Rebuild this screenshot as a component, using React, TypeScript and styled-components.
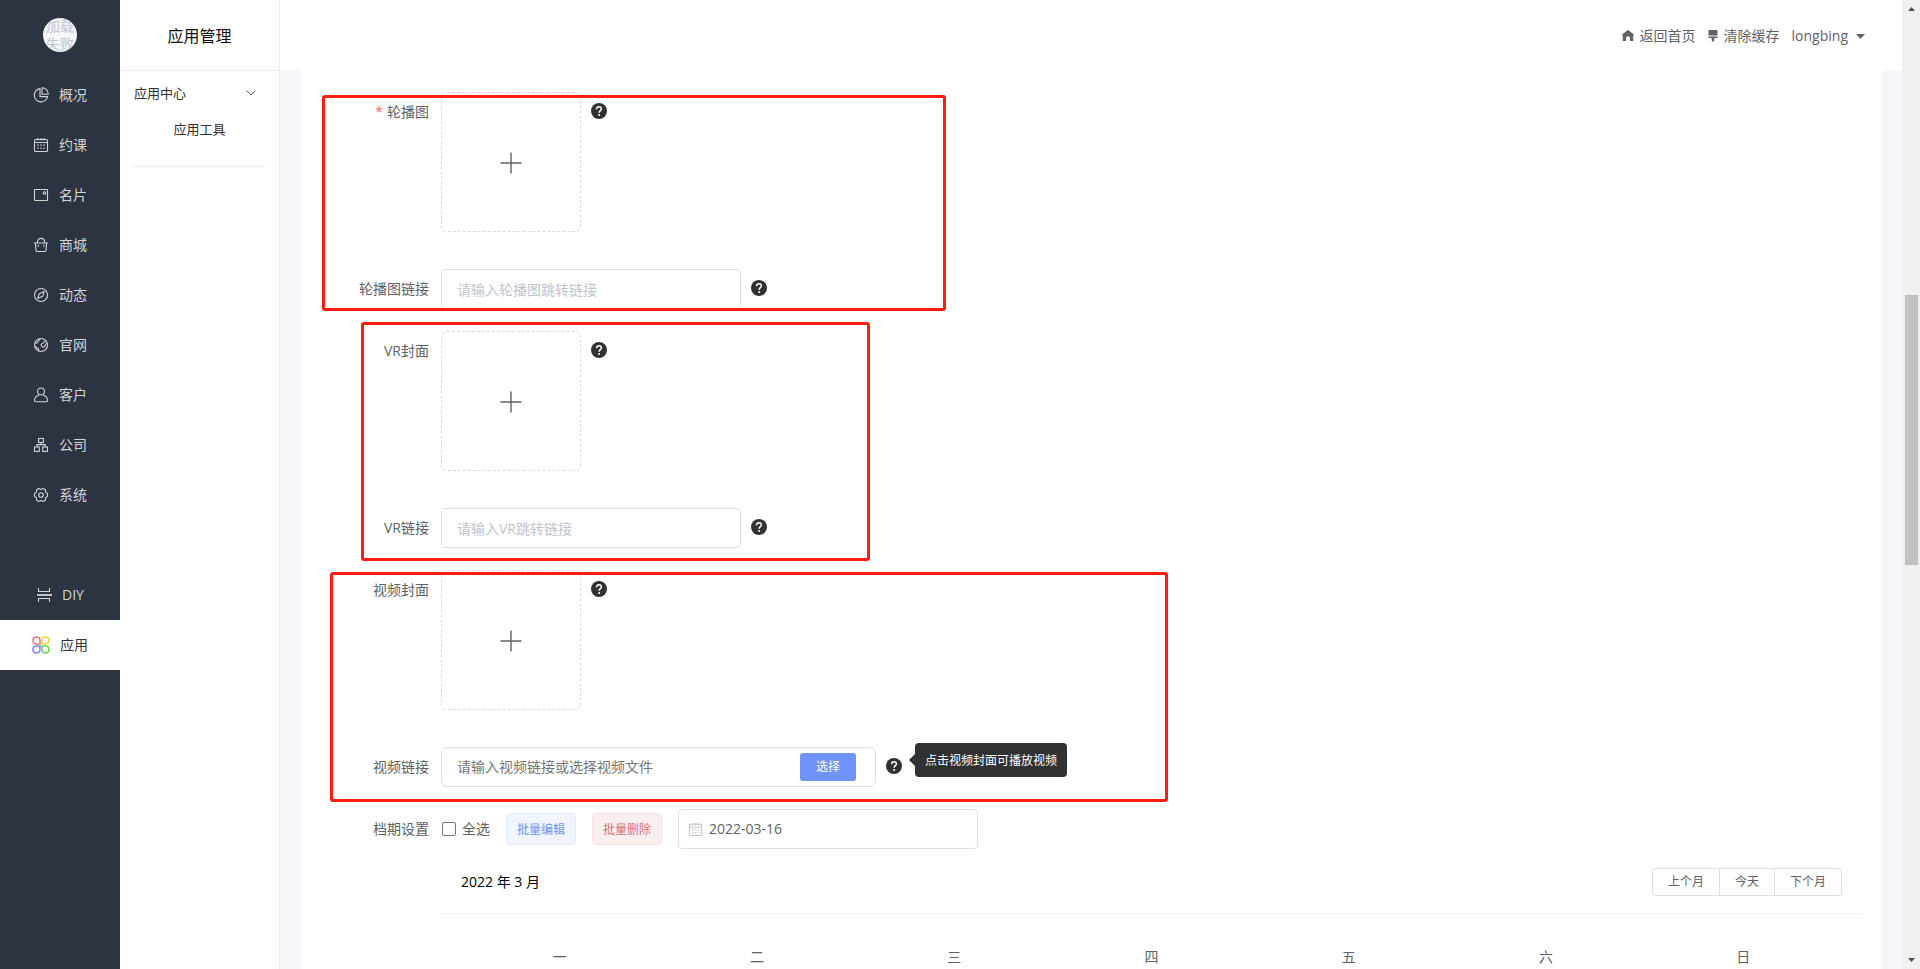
import React from 'react';
import styled, { createGlobalStyle } from 'styled-components';

const GlobalStyle = createGlobalStyle`
  *, *::before, *::after { box-sizing: border-box; }
  body {
    margin: 0;
    background: #f5f6fa;
    color: #606266;
    font-family: 'Open Sans', 'Noto Sans CJK SC', sans-serif;
    font-size: 14px;
    line-height: 20px;
  }
  button, input { font: inherit; color: inherit; }
  a { color: inherit; text-decoration: none; }
  ul { list-style: none; margin: 0; padding: 0; }
`;

const Shell = styled.div`
  display: flex;
  height: 100vh;
  overflow: hidden;
`;

/* ---------- dark navigation ---------- */

const Sidebar = styled.nav`
  flex: none;
  width: 120px;
  background: #2d3441;
`;

const AvatarRow = styled.div`
  height: 70px;
  display: flex;
  align-items: center;
  justify-content: center;
`;

const Avatar = styled.div`
  width: 34px;
  height: 34px;
  border-radius: 50%;
  overflow: hidden;
  background: #f5f7fa;
  color: #c0c4cc;
  display: flex;
  align-items: center;
  justify-content: center;
  text-align: center;
  line-height: 18px;
`;

const NavItem = styled.li<{ $spaced?: boolean }>`
  margin-top: ${(p) => (p.$spaced ? '50px' : '0')};
`;

const NavLink = styled.a<{ $active?: boolean }>`
  display: flex;
  align-items: center;
  justify-content: center;
  gap: 10px;
  height: 50px;
  background: ${(p) => (p.$active ? '#fff' : 'transparent')};
  color: ${(p) => (p.$active ? '#2d3441' : '#d2d3d6')};
`;

/* ---------- light sub navigation ---------- */

const SubSidebar = styled.aside`
  flex: none;
  width: 160px;
  background: #fff;
  border-right: 1px solid #ececee;
`;

const SubTitle = styled.h1`
  margin: 0;
  height: 71px;
  padding-top: 2px;
  display: flex;
  align-items: center;
  justify-content: center;
  border-bottom: 1px solid #ececec;
  color: #101010;
  font-size: 16px;
  font-weight: 400;
`;

const SubMenu = styled.div`
  margin: 0 14px;
  padding-bottom: 23px;
  border-bottom: 1px solid #e9eaf2;
  color: #303133;
  font-size: 13px;
`;

const SubGroup = styled.button`
  display: flex;
  align-items: center;
  justify-content: space-between;
  width: 100%;
  height: 44px;
  padding: 0 9px 0 0;
  border: 0;
  background: none;
`;

const SubLink = styled.a`
  display: block;
  text-align: center;
  line-height: 28px;
`;

/* ---------- main column ---------- */

const Main = styled.div`
  flex: 1;
  min-width: 0;
  display: flex;
  flex-direction: column;
`;

const Header = styled.header`
  flex: none;
  height: 70px;
  padding: 2px 37px 0 0;
  display: flex;
  align-items: center;
  justify-content: flex-end;
  background: #fff;
`;

const HeaderLink = styled.a`
  display: flex;
  align-items: center;
  gap: 6px;
  margin-right: 12px;
`;

const UserButton = styled.button`
  display: flex;
  align-items: center;
  gap: 8px;
  padding: 0;
  border: 0;
  background: none;
`;

const Panel = styled.main`
  flex: 1;
  margin: 0 20px 0 21px;
  padding: 22px 20px 0;
  background: #fff;
`;

const Group = styled.section`
  position: relative;
`;

const Highlight = styled.div<{ $top: number; $left: number; $width: number; $height: number }>`
  position: absolute;
  top: ${(p) => p.$top}px;
  left: ${(p) => p.$left}px;
  width: ${(p) => p.$width}px;
  height: ${(p) => p.$height}px;
  border: 3px solid #ff1d12;
  border-radius: 3px;
  pointer-events: none;
`;

const Row = styled.div<{ $tall?: boolean; $last?: boolean }>`
  display: flex;
  align-items: flex-start;
  min-height: ${(p) => (p.$tall ? '155px' : '40px')};
  margin-bottom: ${(p) => (p.$last ? '0' : '22px')};
`;

const Label = styled.label<{ $required?: boolean }>`
  flex: none;
  width: 120px;
  padding-right: 12px;
  text-align: right;
  line-height: 40px;
  &::before {
    content: ${(p) => (p.$required ? "'*'" : 'none')};
    margin-right: 4px;
    color: #f56c6c;
  }
`;

const Uploader = styled.button`
  width: 140px;
  height: 140px;
  padding: 2px 0 0;
  display: flex;
  align-items: center;
  justify-content: center;
  border: 1px dashed #d9d9d9;
  border-radius: 6px;
  background: #fff;
`;

const TextInput = styled.input`
  width: 300px;
  height: 40px;
  padding: 0 15px;
  border: 1px solid #dcdfe6;
  border-radius: 4px;
  background: #fff;
  &::placeholder { color: #c0c4cc; }
`;

const PickField = styled.div`
  display: flex;
  align-items: center;
  width: 435px;
  height: 40px;
  padding-right: 19px;
  border: 1px solid #dcdfe6;
  border-radius: 6px;
`;

const BareInput = styled.input`
  flex: 1;
  min-width: 0;
  padding: 0 15px;
  border: 0;
  outline: 0;
  background: none;
  &::placeholder { color: #757575; }
`;

const PickButton = styled.button`
  width: 56px;
  height: 28px;
  padding: 0;
  border: 0;
  border-radius: 3px;
  background: #7093fb;
  color: #fff;
  font-size: 12px;
`;

const HelpWrap = styled.span`
  position: relative;
  display: flex;
  align-items: center;
  height: 38px;
  margin-left: 10px;
`;

const Tooltip = styled.span`
  position: absolute;
  left: 29px;
  top: -4px;
  padding: 8px 10px 6px;
  border-radius: 4px;
  background: #303133;
  color: #fff;
  font-size: 12px;
  white-space: nowrap;
  &::before {
    content: '';
    position: absolute;
    left: -6px;
    top: 11px;
    border: 6px solid transparent;
    border-left-width: 0;
    border-right-color: #303133;
  }
`;

const Toolbar = styled.div`
  display: flex;
  align-items: center;
  gap: 16px;
`;

const CheckLabel = styled.label`
  display: flex;
  align-items: center;
  gap: 6px;
`;

const CheckBox = styled.input`
  appearance: none;
  width: 14px;
  height: 14px;
  margin: 0 0 0 1px;
  border: 1px solid #767676;
  border-radius: 2px;
  background: #fff;
  &:checked { background: #7093fb; }
`;

const BatchButton = styled.button<{ $danger?: boolean }>`
  width: 70px;
  height: 32px;
  padding: 1px 0 0;
  border: 1px solid ${(p) => (p.$danger ? '#f7e1e1' : '#e0e9fe')};
  border-radius: 4px;
  background: ${(p) => (p.$danger ? '#faefef' : '#f0f4ff')};
  color: ${(p) => (p.$danger ? '#d9706f' : '#7093fb')};
  font-size: 12px;
`;

const DateField = styled.div`
  display: flex;
  align-items: center;
  width: 300px;
  height: 40px;
  padding-left: 9px;
  border: 1px solid #dcdfe6;
  border-radius: 4px;
  input { padding: 0 6px; }
`;

const DateIcon = styled.span`
  display: flex;
  color: #c0c4cc;
`;

const Calendar = styled.section`
  margin-left: 120px;
`;

const CalendarHeader = styled.div`
  display: flex;
  align-items: center;
  justify-content: space-between;
  height: 65px;
  padding: 2px 20px 0;
  border-bottom: 1px solid #ebeef5;
`;

const CalendarTitle = styled.h2`
  margin: 0;
  color: #000;
  font-size: 14px;
  font-weight: 400;
`;

const ButtonGroup = styled.div`
  display: flex;
`;

const MonthButton = styled.button`
  height: 28px;
  padding: 0 15px;
  border: 1px solid #dcdfe6;
  background: #fff;
  font-size: 12px;
  line-height: 12px;
  &:not(:first-child) { margin-left: -1px; }
  &:first-child { border-radius: 3px 0 0 3px; }
  &:last-child { border-radius: 0 3px 3px 0; }
`;

const WeekTable = styled.table`
  width: 100%;
  padding: 12px 20px 0;
  border-spacing: 0;
  table-layout: fixed;
  th { padding: 21px 0 0; font-weight: 400; }
`;

/* ---------- window scrollbar ---------- */

const ScrollTrack = styled.div`
  flex: none;
  width: 18px;
  padding-left: 1px;
  display: flex;
  flex-direction: column;
  align-items: center;
  background: #f0f0f0;
`;

const ScrollArrow = styled.span<{ $down?: boolean }>`
  flex: none;
  width: 17px;
  height: 17px;
  display: flex;
  align-items: center;
  justify-content: center;
  transform: ${(p) => (p.$down ? 'rotate(180deg)' : 'none')};
`;

const ScrollSpace = styled.span<{ $grow: number; $thumb?: boolean }>`
  width: 13px;
  flex: ${(p) => p.$grow} 0 0;
  background: ${(p) => (p.$thumb ? '#c1c1c1' : 'transparent')};
`;

/* ---------- icons ---------- */

const Line = ({ children, size = 16 }: { children: React.ReactNode; size?: number }) => (
  <svg width={size} height={size} viewBox="0 0 16 16" fill="none" stroke="currentColor" strokeWidth="1.1" aria-hidden="true">
    {children}
  </svg>
);

const PieIcon = () => (
  <Line>
    <path d="M7 1.6A6.7 6.7 0 1 0 14.6 9.6H7Z" strokeLinejoin="round" />
    <path d="M9 .8V7.2H15.3A6.4 6.4 0 0 0 9 .8Z" strokeLinejoin="round" />
  </Line>
);
const CalendarIcon = ({ size }: { size?: number }) => (
  <Line size={size}>
    <rect x="1.5" y="2.5" width="13" height="12" rx="1" />
    <path d="M1.5 5.5H14.5M5 1V3.6M8 1V3.6M11 1V3.6" />
    <path d="M4.3 8.2H5.7M7.3 8.2H8.7M10.3 8.2H11.7M4.3 11.2H5.7M7.3 11.2H8.7M10.3 11.2H11.7" strokeWidth="1.3" />
  </Line>
);
const CardIcon = () => (
  <Line>
    <rect x="1.5" y="2.5" width="13" height="11" rx=".6" />
    <circle cx="11.5" cy="6" r="1.3" />
  </Line>
);
const BagIcon = () => (
  <Line>
    <path d="M1 6H15M2.4 6L3 13.5Q3.1 14.5 4.1 14.5H11.9Q12.9 14.5 13 13.5L13.6 6" />
    <path d="M4.3 6C4.3 3 5.8 1.4 8 1.4S11.7 3 11.7 6M5.2 7.8V9.8M10.8 7.8V9.8" />
  </Line>
);
const CompassIcon = () => (
  <Line>
    <circle cx="8" cy="8" r="6.5" />
    <path d="M11.2 4.6L9.8 9.2L4.8 11.4L6.2 6.8Z" strokeLinejoin="round" />
  </Line>
);
const GlobeIcon = () => (
  <Line>
    <circle cx="8" cy="8" r="6.5" />
    <path d="M2 5.6C3.4 6.6 5 6 4.9 4.6C4.8 3.4 6.4 4 6.9 1.8M8.3 8.8C7.6 7.4 8.6 6.6 9.8 6.2C11 5.8 10.8 4.6 12.6 3.8M14.3 6C12.4 6.4 12.6 8.2 11.6 9.4C10.6 10.6 9 10.2 8.3 8.8M1.9 9.8C3.6 9.6 3.6 11.2 4.8 11.4C6 11.6 6 13 5.4 14" />
  </Line>
);
const PersonIcon = () => (
  <Line>
    <circle cx="8" cy="4.4" r="3.4" />
    <path d="M5.8 8.2C3.2 8.8 1.5 11 1.5 13.4Q1.5 14.8 2.9 14.8H13.1Q14.5 14.8 14.5 13.4C14.5 11 12.8 8.8 10.2 8.2" />
  </Line>
);
const OrgIcon = () => (
  <Line>
    <rect x="5.6" y="1.5" width="4.8" height="4" />
    <rect x="1.5" y="10" width="4.8" height="4.4" />
    <rect x="9.7" y="10" width="4.8" height="4.4" />
    <path d="M8 5.5V7.6M3.9 10V7.6H12.1V10" />
  </Line>
);
const GearIcon = () => (
  <Line>
    <path d="M5.9 1.5L8 2.4L10.1 1.5L12.4 2.8L12.6 5.2L14.5 6.6V9.4L12.6 10.8L12.4 13.2L10.1 14.5L8 13.6L5.9 14.5L3.6 13.2L3.4 10.8L1.5 9.4V6.6L3.4 5.2L3.6 2.8Z" strokeLinejoin="round" />
    <circle cx="8" cy="8" r="2.3" />
  </Line>
);
const DiyIcon = () => (
  <Line>
    <path d="M2.5 1V4.5H13.5V1M2.5 15V11.5H13.5V15" />
    <path d="M1 8H16" strokeWidth="1.8" />
  </Line>
);
const AppsIcon = () => (
  <svg width="18" height="18" viewBox="0 0 18 18" fill="none" strokeWidth="1.6" aria-hidden="true">
    <path stroke="#e08080" d="M4.5 1H5Q8 1 8 4.5V8H4.5Q1 8 1 4.5T4.5 1Z" />
    <path stroke="#f0d840" d="M13.5 1Q17 1 17 4.5T13.5 8H10V4.5Q10 1 13.5 1Z" />
    <path stroke="#8088ff" d="M4.5 10H8V13.5Q8 17 4.5 17T1 13.5T4.5 10Z" />
    <path stroke="#68d858" d="M10 10H13.5Q17 10 17 13.5T13.5 17T10 13.5Z" />
  </svg>
);
const ChevronIcon = () => (
  <svg width="10" height="6" viewBox="0 0 10 6" fill="none" stroke="#606266" aria-hidden="true">
    <path d="M.5 .5L5 5L9.5 .5" />
  </svg>
);
const HomeIcon = () => (
  <svg width="12" height="12" viewBox="0 0 12 12" fill="currentColor" aria-hidden="true">
    <path d="M6 0L12 4.4L11.2 5.4V11H8V8Q8 6.2 6 6.2T4 8V11H.8V5.4L0 4.4Z" />
  </svg>
);
const BrushIcon = () => (
  <svg width="10" height="12" viewBox="0 0 10 12" fill="currentColor" aria-hidden="true">
    <path d="M.5 0H9.5V5.6H.5ZM.5 6.4H9.5V8H6.3V10.6L5 12L3.7 10.6V8H.5Z" />
  </svg>
);
const CaretIcon = () => (
  <svg width="9" height="5" viewBox="0 0 9 5" fill="currentColor" aria-hidden="true">
    <path d="M0 0H9L4.5 5Z" />
  </svg>
);
const PlusIcon = () => (
  <svg width="22" height="22" viewBox="0 0 22 22" stroke="#606266" strokeWidth="1.4" aria-hidden="true">
    <path d="M11 .5V21.5M.5 11H21.5" />
  </svg>
);
const HelpIcon = () => (
  <svg width="16" height="16" viewBox="0 0 16 16" aria-hidden="true">
    <circle cx="8" cy="8" r="8" fill="#303133" />
    <path d="M5.6 6.2C5.6 4.6 6.6 3.8 8 3.8S10.4 4.7 10.4 6C10.4 7.6 8.1 7.8 8.1 9.8" fill="none" stroke="#fff" strokeWidth="1.5" />
    <circle cx="8.1" cy="12" r="1" fill="#fff" />
  </svg>
);
const ArrowGlyph = () => (
  <svg width="7" height="4" viewBox="0 0 7 4" fill="#505050" aria-hidden="true">
    <path d="M3.5 0L7 4H0Z" />
  </svg>
);

/* ---------- page ---------- */

const navItems = [
  { text: '概况', icon: <PieIcon /> },
  { text: '约课', icon: <CalendarIcon /> },
  { text: '名片', icon: <CardIcon /> },
  { text: '商城', icon: <BagIcon /> },
  { text: '动态', icon: <CompassIcon /> },
  { text: '官网', icon: <GlobeIcon /> },
  { text: '客户', icon: <PersonIcon /> },
  { text: '公司', icon: <OrgIcon /> },
  { text: '系统', icon: <GearIcon /> },
  { text: 'DIY', icon: <DiyIcon />, spaced: true },
  { text: '应用', icon: <AppsIcon />, active: true },
];

const weekdays = ['一', '二', '三', '四', '五', '六', '日'];

const UploadRow = ({ id, label, required }: { id: string; label: string; required?: boolean }) => (
  <Row $tall>
    <Label htmlFor={id} $required={required}>{label}</Label>
    <Uploader id={id} type="button"><PlusIcon /></Uploader>
    <HelpWrap><HelpIcon /></HelpWrap>
  </Row>
);

const LinkRow = ({ id, label, placeholder }: { id: string; label: string; placeholder: string }) => (
  <Row>
    <Label htmlFor={id}>{label}</Label>
    <TextInput id={id} type="text" placeholder={placeholder} />
    <HelpWrap><HelpIcon /></HelpWrap>
  </Row>
);

export default function App() {
  return (
    <>
      <GlobalStyle />
      <Shell>
        <Sidebar>
          <AvatarRow><Avatar>加载失败</Avatar></AvatarRow>
          <ul>
            {navItems.map((item) => (
              <NavItem key={item.text} $spaced={item.spaced}>
                <NavLink href="#" $active={item.active}>{item.icon}{item.text}</NavLink>
              </NavItem>
            ))}
          </ul>
        </Sidebar>
        <SubSidebar>
          <SubTitle>应用管理</SubTitle>
          <SubMenu>
            <SubGroup type="button">应用中心<ChevronIcon /></SubGroup>
            <SubLink href="#">应用工具</SubLink>
          </SubMenu>
        </SubSidebar>
        <Main>
          <Header>
            <HeaderLink href="#"><HomeIcon />返回首页</HeaderLink>
            <HeaderLink href="#"><BrushIcon />清除缓存</HeaderLink>
            <UserButton type="button">longbing<CaretIcon /></UserButton>
          </Header>
          <Panel>
            <Group>
              <UploadRow id="banner" label="轮播图" required />
              <LinkRow id="banner-link" label="轮播图链接" placeholder="请输入轮播图跳转链接" />
              <Highlight $top={3} $left={1} $width={624} $height={216} />
            </Group>
            <Group>
              <UploadRow id="vr" label="VR封面" />
              <LinkRow id="vr-link" label="VR链接" placeholder="请输入VR跳转链接" />
              <Highlight $top={-9} $left={40} $width={509} $height={239} />
            </Group>
            <Group>
              <UploadRow id="video" label="视频封面" />
              <Row>
                <Label htmlFor="video-link">视频链接</Label>
                <PickField>
                  <BareInput id="video-link" type="text" placeholder="请输入视频链接或选择视频文件" />
                  <PickButton type="button">选择</PickButton>
                </PickField>
                <HelpWrap>
                  <HelpIcon />
                  <Tooltip role="tooltip">点击视频封面可播放视频</Tooltip>
                </HelpWrap>
              </Row>
              <Highlight $top={2} $left={9} $width={838} $height={230} />
            </Group>
            <Row $last>
              <Label htmlFor="schedule">档期设置</Label>
              <Toolbar>
                <CheckLabel><CheckBox type="checkbox" />全选</CheckLabel>
                <BatchButton type="button">批量编辑</BatchButton>
                <BatchButton type="button" $danger>批量删除</BatchButton>
                <DateField>
                  <DateIcon><CalendarIcon size={15} /></DateIcon>
                  <BareInput id="schedule" type="text" defaultValue="2022-03-16" />
                </DateField>
              </Toolbar>
            </Row>
            <Calendar>
              <CalendarHeader>
                <CalendarTitle>2022 年 3 月</CalendarTitle>
                <ButtonGroup>
                  <MonthButton type="button">上个月</MonthButton>
                  <MonthButton type="button">今天</MonthButton>
                  <MonthButton type="button">下个月</MonthButton>
                </ButtonGroup>
              </CalendarHeader>
              <WeekTable>
                <thead>
                  <tr>{weekdays.map((d) => <th key={d} scope="col">{d}</th>)}</tr>
                </thead>
              </WeekTable>
            </Calendar>
          </Panel>
        </Main>
        <ScrollTrack aria-hidden="true">
          <ScrollArrow><ArrowGlyph /></ScrollArrow>
          <ScrollSpace $grow={278} />
          <ScrollSpace $grow={270} $thumb />
          <ScrollSpace $grow={387} />
          <ScrollArrow $down><ArrowGlyph /></ScrollArrow>
        </ScrollTrack>
      </Shell>
    </>
  );
}
